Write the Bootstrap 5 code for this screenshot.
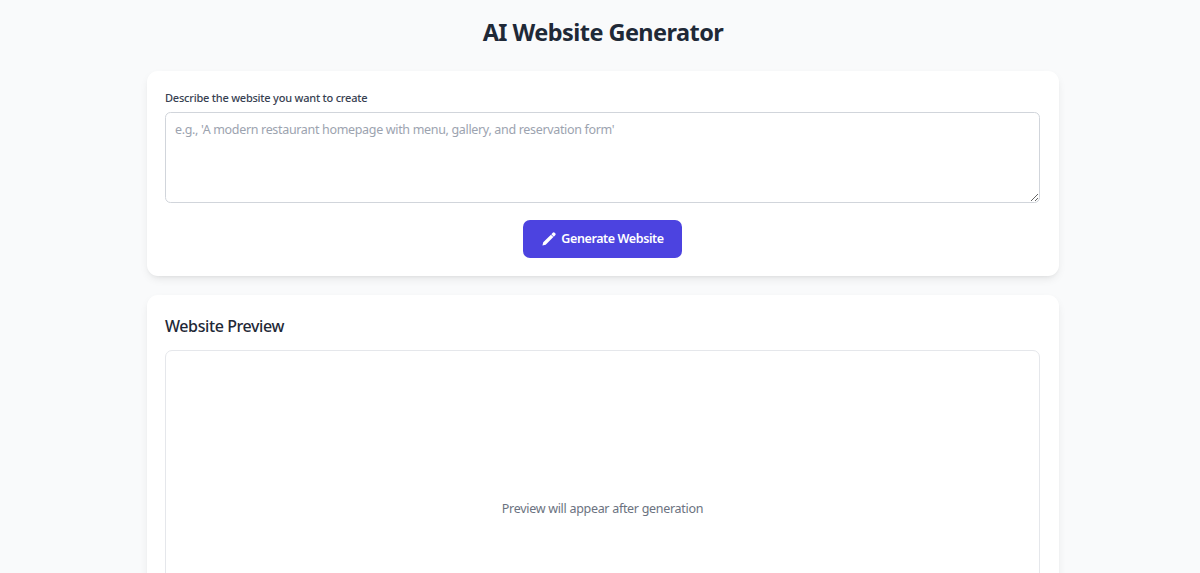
<!DOCTYPE html>
<html lang="en">

<head>
  <meta charset="UTF-8">
  <meta name="viewport" content="width=device-width, initial-scale=1">
  <title>AI Website Generator</title>
  <link href="https://cdn.jsdelivr.net/npm/bootstrap@5.3.3/dist/css/bootstrap.min.css" rel="stylesheet">
  <style>
    html, body {
      height: 573px;
      overflow: hidden;
    }

    body {
      background-color: #f9fafb;
      font-family: "Noto Sans", sans-serif;
      color: #1f2937;
    }

    .gen-wrap {
      width: 912px;
      margin-left: 147px;
      padding-top: 15px;
    }

    .gen-title {
      font-size: 23.5px;
      letter-spacing: -.55px;
      line-height: 34px;
      font-weight: 700;
      margin-bottom: 22px;
      color: #1f2937;
    }

    .gen-card {
      background: #fff;
      border-radius: 11px;
      padding: 18px;
      margin-bottom: 19px;
      box-shadow: 0 4px 10px -2px rgba(0, 0, 0, .1), 0 2px 4px -2px rgba(0, 0, 0, .06);
    }

    .gen-label {
      font-size: 11px;
      letter-spacing: -.22px;
      line-height: 18px;
      font-weight: 500;
      color: #374151;
      margin-bottom: 5px;
      display: block;
    }

    .gen-input {
      display: block;
      width: 875px;
      height: 91px;
      border: 1px solid #d1d5db;
      border-radius: 5.5px;
      padding: 7px 9px;
      font-size: 12.5px;
      letter-spacing: -.33px;
      line-height: 20px;
      outline: none;
      color: #1f2937;
    }

    .gen-input::placeholder {
      color: #9ca3af;
    }

    .gen-btn {
      background: #4c43e0;
      border: 0;
      color: #fff;
      height: 37.5px;
      width: 159px;
      border-radius: 7px;
      font-size: 12.5px;
      letter-spacing: -.4px;
      font-weight: 600;
      margin-top: 17px;
      margin-right: 2px;
      padding: 1px 0 0 2px;
      gap: 5px;
    }

    .gen-btn svg {
      width: 14px;
      height: 14px;
      fill: currentColor;
      margin-top: -1px;
    }

    .gen-sub {
      font-size: 16px;
      letter-spacing: -.4px;
      line-height: 24px;
      font-weight: 500;
      margin-bottom: 12px;
      padding-top: 1px;
      color: #1f2937;
    }

    .gen-preview {
      border: 1px solid #e5e7eb;
      border-radius: 7px;
      width: 875px;
      height: 320px;
      font-size: 12.5px;
      letter-spacing: -.3px;
      color: #6b7280;
    }
  </style>
</head>

<body>
  <div class="gen-wrap">
    <h1 class="gen-title text-center">AI Website Generator</h1>

    <div class="gen-card">
      <label class="gen-label" for="prompt">Describe the website you want to create</label>
      <textarea id="prompt" class="gen-input" placeholder="e.g., 'A modern restaurant homepage with menu, gallery, and reservation form'"></textarea>
      <div class="d-flex justify-content-center">
        <button type="button" class="gen-btn d-flex align-items-center justify-content-center">
          <svg viewBox="0 0 16 16" aria-hidden="true"><path d="M12.3.9a1.6 1.6 0 0 1 2.2 0l.6.6a1.6 1.6 0 0 1 0 2.2l-1.6 1.6-2.8-2.8zM10.2 3l2.8 2.8-8.8 8.8-3.7.9.9-3.7z"/></svg>
          <span>Generate Website</span>
        </button>
      </div>
    </div>

    <div class="gen-card">
      <h2 class="gen-sub">Website Preview</h2>
      <div class="gen-preview d-flex align-items-center justify-content-center">Preview will appear after generation</div>
    </div>
  </div>

  <script src="https://cdn.jsdelivr.net/npm/bootstrap@5.3.3/dist/js/bootstrap.bundle.min.js"></script>
</body>

</html>
